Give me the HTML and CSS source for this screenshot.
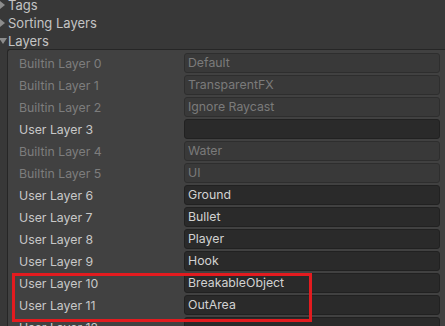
FILE: index.html
```html
<!DOCTYPE html>
<html>
<head>
<meta charset="utf-8">
<link rel="stylesheet" href="styles.css">
</head>
<body>
<div class="inspector">
  <div class="fold"><span class="arrow right"></span><span class="fold-label">Tags</span></div>
  <div class="fold"><span class="arrow right"></span><span class="fold-label">Sorting Layers</span></div>
  <div class="fold"><span class="arrow down"></span><span class="fold-label">Layers</span></div>
  <div class="panel">
    <div class="row builtin"><span class="label">Builtin Layer 0</span><span class="field">Default</span></div>
    <div class="row builtin"><span class="label">Builtin Layer 1</span><span class="field">TransparentFX</span></div>
    <div class="row builtin"><span class="label">Builtin Layer 2</span><span class="field">Ignore Raycast</span></div>
    <div class="row"><span class="label">User Layer 3</span><span class="field"></span></div>
    <div class="row builtin"><span class="label">Builtin Layer 4</span><span class="field">Water</span></div>
    <div class="row builtin"><span class="label">Builtin Layer 5</span><span class="field">UI</span></div>
    <div class="row"><span class="label">User Layer 6</span><span class="field">Ground</span></div>
    <div class="row"><span class="label">User Layer 7</span><span class="field">Bullet</span></div>
    <div class="row"><span class="label">User Layer 8</span><span class="field">Player</span></div>
    <div class="row"><span class="label">User Layer 9</span><span class="field">Hook</span></div>
    <div class="row"><span class="label">User Layer 10</span><span class="field">BreakableObject</span></div>
    <div class="row"><span class="label">User Layer 11</span><span class="field">OutArea</span></div>
    <div class="row"><span class="label">User Layer 12</span><span class="field"></span></div>
    <div class="highlight"></div>
  </div>
</div>
</body>
</html>
```
FILE: styles.css
```css
html, body {
  margin: 0;
  padding: 0;
  background: #383838;
  overflow: hidden;
  width: 445px;
  height: 326px;
}
.inspector {
  font-family: Inter, "Noto Sans", sans-serif;
  font-size: 12px;
  color: #c8c8c8;
  margin-top: -5px;
}
.fold {
  height: 18px;
  padding-top: 1px;
  box-sizing: border-box;
  display: flex;
  align-items: center;
}
.arrow {
  width: 8px;
  height: 8px;
  display: flex;
  align-items: center;
  justify-content: flex-start;
}
.arrow.right::before {
  content: "";
  border-left: 5px solid #8c8c8c;
  border-top: 4px solid transparent;
  border-bottom: 4px solid transparent;
}
.arrow.down::before {
  content: "";
  border-top: 6px solid #8c8c8c;
  border-left: 4px solid transparent;
  border-right: 4px solid transparent;
  margin-left: -1px;
}
.fold-label {
  font-size: 13px;
  color: #c4c4c4;
}
.panel {
  position: relative;
  margin-left: 7px;
  border-top: 1px solid #262626;
  border-left: 1px solid #262626;
  border-top-left-radius: 3px;
  background: #414141;
  padding-top: 2px;
  padding-left: 11px;
  padding-right: 5px;
}
.row {
  height: 22px;
  display: flex;
  align-items: center;
}
.label {
  width: 165px;
  color: #c8c8c8;
  font-size: 12.3px;
}
.field {
  flex: 1;
  height: 20px;
  box-sizing: border-box;
  border: 1px solid #212121;
  border-radius: 3px;
  background: #2a2a2a;
  color: #d2d2d2;
  padding-left: 3px;
  line-height: 18px;
  font-size: 12.3px;
}
.row.builtin .label {
  color: #7d7d7d;
}
.row.builtin .field {
  background: #393939;
  border-color: #2e2e2e;
  color: #7b7b7b;
}
.highlight {
  position: absolute;
  left: 4px;
  top: 223px;
  width: 300px;
  height: 49px;
  box-sizing: border-box;
  border: 3px solid #e31b1f;
}
```
